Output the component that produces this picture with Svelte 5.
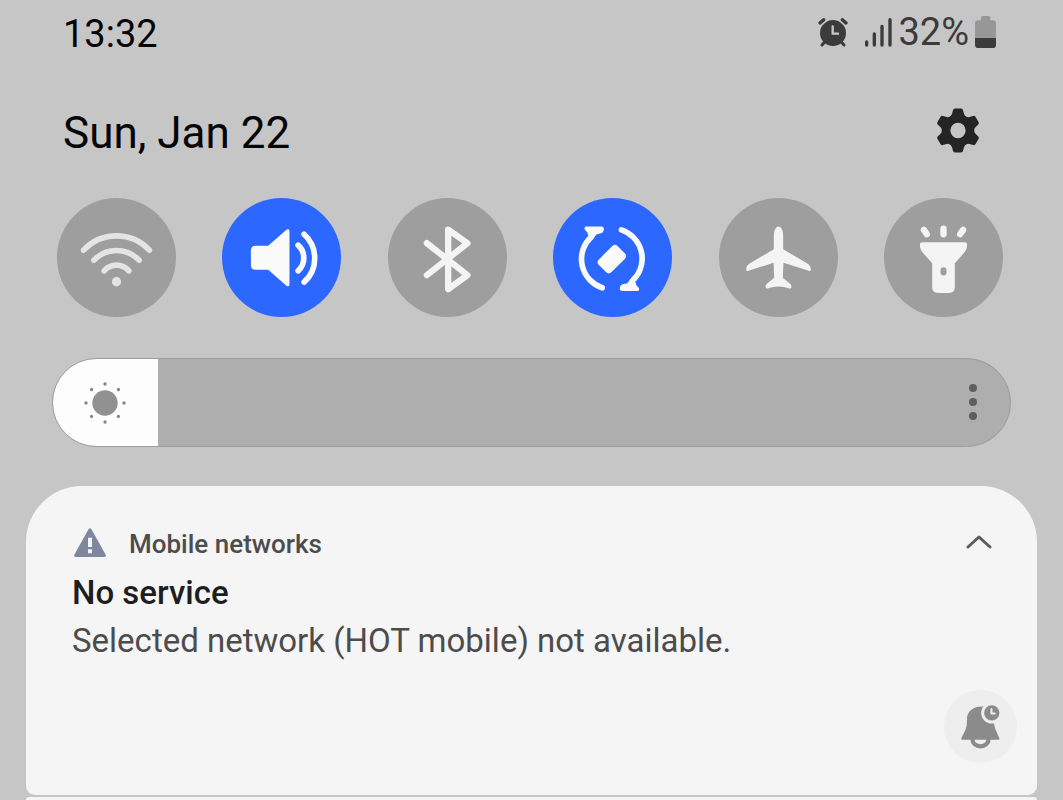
<script lang="ts">
    let brightness: number = 11;
    let expanded: boolean = true;

    let toggles = [
        { id: "wifi", label: "Wi-Fi", on: false },
        { id: "sound", label: "Sound", on: true },
        { id: "bluetooth", label: "Bluetooth", on: false },
        { id: "rotate", label: "Auto rotate", on: true },
        { id: "airplane", label: "Airplane mode", on: false },
        { id: "torch", label: "Flashlight", on: false },
    ];

    const gearTeeth: number[] = [0, 60, 120, 180, 240, 300];
    const sunRays: number[] = [0, 45, 90, 135, 180, 225, 270, 315];

    const flip = (index: number) => {
        toggles[index].on = !toggles[index].on;
    };
</script>

<main class="shade">
    <header class="status">
        <time>13:32</time>
        <div class="indicators">
            <svg class="alarm" viewBox="-45 -48 90 90" aria-hidden="true">
                <circle r="39" fill="#3b3b3b" />
                <path
                    d="M-38 -30L-29 -38M38 -30L29 -38"
                    stroke="#c6c6c6"
                    stroke-width="18"
                />
                <path
                    d="M-39 -30L-28 -40M39 -30L28 -40"
                    stroke="#3b3b3b"
                    stroke-width="10"
                />
                <path
                    d="M-26 28L-33 36M26 28L33 36"
                    stroke="#3b3b3b"
                    stroke-width="9"
                />
                <path d="M-1 -20V2H15" stroke="#c6c6c6" stroke-width="7" />
            </svg>
            <svg class="signal" viewBox="0 0 81 87" aria-hidden="true">
                <path
                    d="M5 72V81M28 48V81M51 25V81M75 5V81"
                    stroke="#3b3b3b"
                    stroke-width="10"
                />
            </svg>
            <span>32%</span>
            <svg class="battery" viewBox="0 0 63 96" aria-hidden="true">
                <path
                    d="M18 5Q18 0 23 0H41Q46 0 46 5V13H53Q63 13 63 23V66H0V23Q0 13 10 13H18Z"
                    fill="#979797"
                />
                <path d="M0 66H63V86Q63 96 53 96H10Q0 96 0 86Z" fill="#3b3b3b" />
            </svg>
        </div>
    </header>

    <div class="date-row">
        <h1>Sun, Jan 22</h1>
        <button type="button" class="settings" aria-label="Settings">
            <svg viewBox="-66 -67 132 134">
                <circle r="36" stroke="#242424" stroke-width="26" />
                {#each gearTeeth as angle}
                    <path
                        d="M-26 -38Q-19 -45 -18 -50L-15 -61Q-14 -66 -9 -66H9Q14 -66 15 -61L18 -50Q19 -45 26 -38Z"
                        fill="#242424"
                        transform="rotate({angle})"
                    />
                {/each}
            </svg>
        </button>
    </div>

    <div class="toggles">
        {#each toggles as toggle, i}
            <button
                type="button"
                class="toggle {toggle.id}"
                class:on={toggle.on}
                aria-label={toggle.label}
                aria-pressed={toggle.on}
                on:click={() => flip(i)}
            >
                <svg viewBox="-179 -179 358 358">
                    {#if toggle.id === "wifi"}
                        <g stroke="currentColor" stroke-width="17">
                            <path d="M-99 -22A135 135 0 0 1 99 -22" />
                            <path d="M-68 8A94 94 0 0 1 68 8" />
                            <path d="M-37 40A49 49 0 0 1 37 40" />
                        </g>
                        <circle cy="73" r="14" fill="currentColor" />
                    {:else if toggle.id === "sound"}
                        <path
                            d="M-78 -35H-40L14 -83Q24 -90 24 -78V80Q24 91 14 84L-40 37H-78Q-92 37 -92 23V-21Q-92 -35 -78 -35Z"
                            fill="currentColor"
                        />
                        <g stroke="currentColor" stroke-width="17">
                            <path d="M50 -37A52 52 0 0 1 50 40" />
                            <path d="M68 -70A97 97 0 0 1 68 74" />
                        </g>
                    {:else if toggle.id === "bluetooth"}
                        <path
                            d="M-62 -43L60 53L2 95V-84L60 -43L-62 53"
                            stroke="currentColor"
                            stroke-width="19"
                        />
                    {:else if toggle.id === "rotate"}
                        {#each [0, 180] as angle}
                            <g transform="rotate({angle} -2 4)">
                                <path
                                    d="M-63 -63A91 91 0 0 0 -31 91"
                                    stroke="currentColor"
                                    stroke-width="17"
                                />
                                <path
                                    d="M-79 -93H-34Q-25 -93 -26 -84Q-27 -74 -37 -72L-47 -70L-61 -56L-73 -67Q-76 -70 -75 -75L-82 -82Q-88 -91 -79 -93Z"
                                    fill="currentColor"
                                />
                            </g>
                        {/each}
                        <rect
                            x="-40"
                            y="-27"
                            width="80"
                            height="54"
                            rx="12"
                            fill="currentColor"
                            transform="translate(-2 5) rotate(-45)"
                        />
                    {:else if toggle.id === "airplane"}
                        <path
                            d="M0 -93C8 -93 14 -80 14 -68V-25L88 19Q97 25 97 33V37Q97 42 91 40L15 16L13 61L34 78Q39 82 39 88Q39 95 33 93Q0 82 -33 93Q-39 95 -39 88Q-39 82 -34 78L-13 61L-15 16L-91 40Q-97 42 -97 37V33Q-97 25 -88 19L-14 -25V-68C-14 -80 -8 -93 0 -93Z"
                            fill="currentColor"
                        />
                    {:else}
                        <path
                            d="M-59 -83L-50 -70M0 -87V-70M59 -83L50 -70"
                            stroke="currentColor"
                            stroke-width="19"
                        />
                        <path
                            fill-rule="evenodd"
                            d="M-64 -46H64Q71 -46 71 -39C71 -25 66 -19 60 -12L34 17V89Q34 107 16 107H-16Q-34 107 -34 89V17L-60 -12C-66 -19 -71 -25 -71 -39Q-71 -46 -64 -46ZM0 29Q-9 29 -9 38V45Q-9 54 0 54Q9 54 9 45V38Q9 29 0 29Z"
                            fill="currentColor"
                        />
                    {/if}
                </svg>
            </button>
        {/each}
    </div>

    <div class="brightness">
        <input
            type="range"
            min="0"
            max="100"
            aria-label="Brightness"
            bind:value={brightness}
            style="--level: {brightness}%"
        />
        <svg class="sun" viewBox="-63 -63 126 126" aria-hidden="true">
            <circle r="38" fill="#919191" />
            {#each sunRays as angle}
                <circle cy="-57" r="5" fill="#858585" transform="rotate({angle})" />
            {/each}
        </svg>
        <button type="button" class="more" aria-label="Brightness options">
            <svg viewBox="0 0 8 38">
                <g fill="#5e5e5e">
                    <circle cx="4" cy="5" r="4" />
                    <circle cx="4" cy="19" r="4" />
                    <circle cx="4" cy="33" r="4" />
                </g>
            </svg>
        </button>
    </div>

    <article class="card">
        <div class="card-header">
            <svg class="warning" viewBox="0 0 96 87" aria-hidden="true">
                <path
                    d="M44 3Q48 -2 52 3L95 80Q98 86 91 87H5Q-2 86 1 80Z"
                    fill="#7f87a0"
                />
                <path d="M42 29H54V57H42ZM42 64H54V76H42Z" fill="#f5f5f5" />
            </svg>
            <span>Mobile networks</span>
            <button
                type="button"
                class="collapse"
                aria-label="Collapse"
                aria-expanded={expanded}
                on:click={() => (expanded = !expanded)}
            >
                <svg viewBox="0 0 78 42">
                    <path
                        d="M6 36L39 6L72 36"
                        stroke="#5c5c5c"
                        stroke-width="9"
                    />
                </svg>
            </button>
        </div>
        <h2>No service</h2>
        {#if expanded}
            <p>Selected network (HOT mobile) not available.</p>
            <button type="button" class="snooze" aria-label="Snooze">
                <svg viewBox="-110 -110 220 220">
                    <ellipse
                        cy="40"
                        rx="24"
                        ry="20"
                        stroke="#8b8b8b"
                        stroke-width="13"
                    />
                    <path
                        d="M-58 36L-45 9Q-41 0 -41 -12V-20C-41 -46 -22 -60 4 -60C28 -60 41 -46 41 -20V-10Q41 0 45 8L57 36Q58 40 54 40H-54Q-59 40 -58 36Z"
                        fill="#8b8b8b"
                    />
                    <circle cx="34" cy="-41" r="32" fill="#eeeeee" />
                    <circle cx="34" cy="-41" r="23" fill="#8b8b8b" />
                    <path d="M33 -53V-39H43" stroke="#eeeeee" stroke-width="6" />
                </svg>
            </button>
        {/if}
    </article>
    <div class="next-card"></div>
</main>

<style>
    :global(body) {
        background: #c6c6c6;
    }
    .shade {
        box-sizing: border-box;
        min-height: 100vh;
        display: flex;
        flex-direction: column;
        background: #c6c6c6;
        font-family: Roboto, sans-serif;
        color: #050505;
    }
    svg {
        display: block;
        fill: none;
        stroke-linecap: round;
        stroke-linejoin: round;
    }
    button {
        padding: 0;
        border: none;
        background: none;
        cursor: pointer;
    }
    h1,
    h2,
    p {
        margin: 0;
    }
    .status {
        height: 68px;
        padding: 0 67px 0 63px;
        display: flex;
        align-items: center;
        justify-content: space-between;
        font-size: 38px;
    }
    .indicators {
        display: flex;
        align-items: center;
        color: #3b3b3b;
        padding-bottom: 4px;
    }
    .alarm {
        width: 30px;
        height: 30px;
        margin-right: 17px;
    }
    .signal {
        width: 27px;
        height: 29px;
        margin-right: 6px;
    }
    .battery {
        width: 21px;
        height: 32px;
        margin-left: 6px;
    }
    .date-row {
        height: 130px;
        padding: 0 83px 0 63px;
        display: flex;
        align-items: center;
        justify-content: space-between;
    }
    h1 {
        font-size: 44px;
        font-weight: 400;
    }
    .settings {
        padding-bottom: 6px;
    }
    .settings svg {
        width: 44px;
        height: 45px;
    }
    .toggles {
        display: flex;
        justify-content: space-between;
        padding: 0 60px 0 57px;
    }
    .toggle {
        width: 119px;
        height: 119px;
        border-radius: 50%;
        background: #9e9e9e;
        color: #f4f4f4;
    }
    .wifi {
        color: #e4e4e4;
    }
    .toggle.on {
        background: #2c67ff;
        color: #fafafa;
    }
    .brightness {
        position: relative;
        margin: 41px 52px 39px;
        height: 89px;
    }
    .brightness input {
        appearance: none;
        box-sizing: border-box;
        display: block;
        width: 100%;
        height: 100%;
        margin: 0;
        border: 1px solid #9c9c9c;
        border-radius: 45px;
        background: linear-gradient(
            to right,
            #fdfdfd var(--level),
            #aeaeae var(--level)
        );
        cursor: pointer;
    }
    /* the fill edge is the handle, so the thumb itself stays hidden */
    .brightness input::-webkit-slider-thumb {
        appearance: none;
        width: 1px;
        height: 87px;
        background: transparent;
    }
    .sun {
        position: absolute;
        top: 24px;
        left: 32px;
        width: 42px;
        height: 42px;
        pointer-events: none;
    }
    .more {
        position: absolute;
        top: 25px;
        right: 34px;
    }
    .more svg {
        width: 8px;
        height: 38px;
    }
    .card {
        margin: 0 26px;
        padding: 34px 20px 32px 46px;
        display: flex;
        flex-direction: column;
        background: #f5f5f5;
        border-radius: 56px 56px 9px 9px;
        line-height: 48px;
    }
    .card-header {
        display: flex;
        align-items: center;
        margin-bottom: 1px;
        font-size: 26px;
        font-weight: 500;
        color: #4c4c4c;
    }
    .warning {
        width: 32px;
        height: 29px;
        margin: 0 23px 4px 2px;
    }
    .collapse {
        margin: 0 25px 4px auto;
    }
    .collapse svg {
        width: 26px;
        height: 14px;
    }
    h2 {
        font-size: 33px;
        font-weight: 500;
        color: #1e1e1e;
    }
    p {
        font-size: 33px;
        color: #4c4c4c;
    }
    .snooze {
        align-self: flex-end;
        width: 73px;
        height: 73px;
        margin-top: 25px;
        border-radius: 50%;
        background: #eeeeee;
    }
    .next-card {
        flex: 1;
        min-height: 2px;
        margin: 2px 26px 0;
        background: #f5f5f5;
        border-radius: 9px 9px 0 0;
    }
</style>
